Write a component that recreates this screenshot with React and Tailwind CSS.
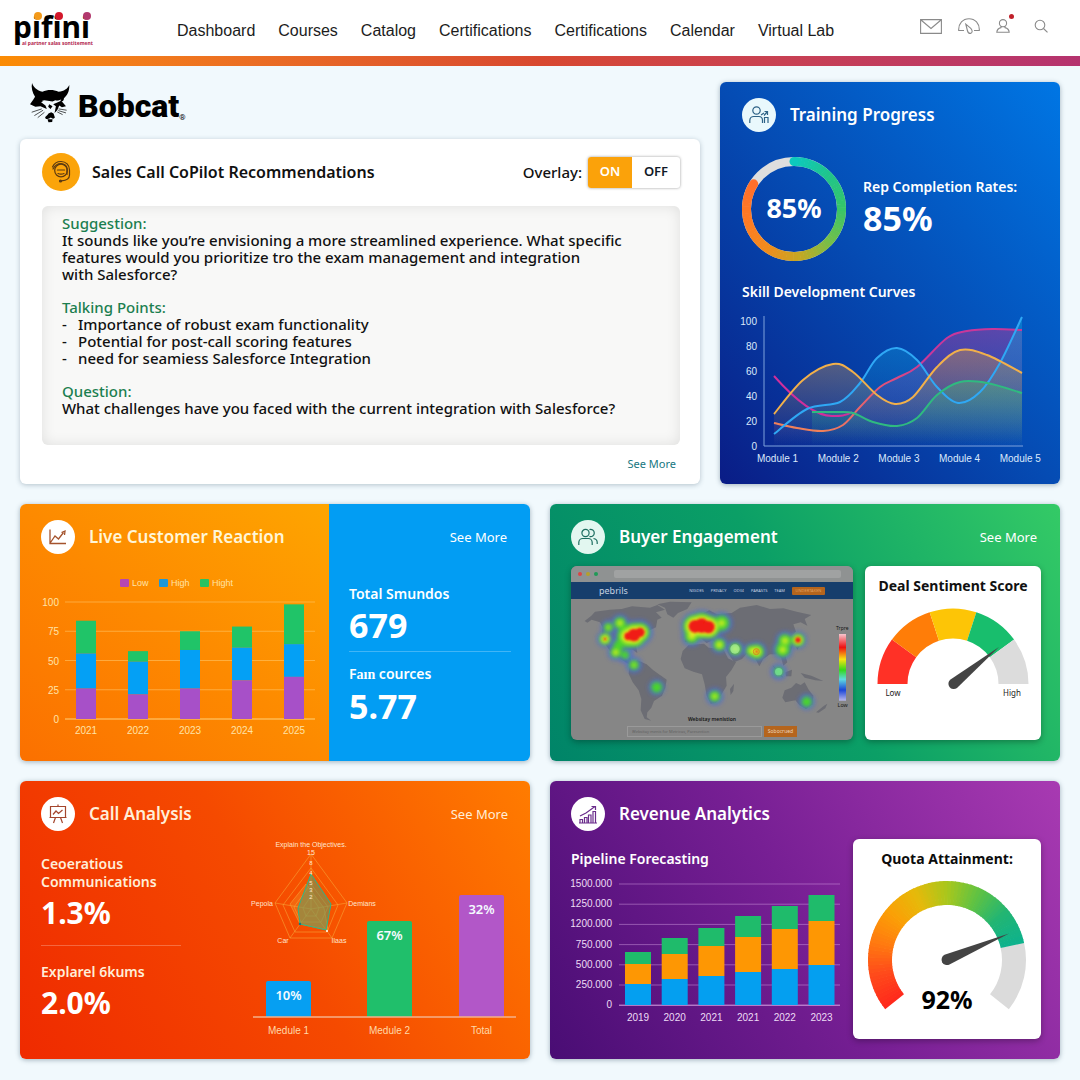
import { useState } from "react";
import clsx from "clsx";

const NAV_LINKS = ["Dashboard", "Courses", "Catalog", "Certifications", "Certifications", "Calendar", "Virtual Lab"];

const SKILL_LABELS = ["Module 1", "Module 2", "Module 3", "Module 4", "Module 5"];

const SKILL_SERIES = [
  { id: "pink", stroke: "url(#warm)", fill: "#b03a9a", points: [[34, 111], [57, 116], [83, 119], [103, 113], [120, 95], [140, 75], [157, 66], [177, 55], [207, 26], [227, 19], [253, 17], [282, 18]] },
  { id: "blue", stroke: "#2fa8f5", fill: "#0f9ad8", points: [[34, 122], [67, 97], [100, 90], [120, 71], [137, 46], [157, 36], [177, 48], [197, 75], [218, 91], [240, 80], [260, 51], [282, 5]] },
  { id: "green", stroke: "#2fba80", fill: "#1fb58a", points: [[72, 100], [97, 100], [113, 101], [133, 110], [157, 114], [177, 106], [197, 83], [220, 70], [247, 71], [282, 81]] },
  { id: "yellow", stroke: "#f2b04a", fill: "#b98a5a", points: [[34, 102], [63, 68], [93, 52], [113, 60], [137, 83], [155, 92], [173, 85], [197, 55], [220, 38], [247, 43], [282, 61]] },
];

const REACTIONS = [
  { year: 2021, low: 26, mid: 30, high: 28 },
  { year: 2022, low: 21, mid: 28, high: 9 },
  { year: 2023, low: 26, mid: 33, high: 16 },
  { year: 2024, low: 33, mid: 28, high: 18 },
  { year: 2025, low: 36, mid: 28, high: 34 },
];

const PIPELINE = [
  { year: 2019, parts: [21, 20, 12] },
  { year: 2020, parts: [26, 25, 16] },
  { year: 2021, parts: [29, 30, 18] },
  { year: 2021, parts: [33, 35, 21] },
  { year: 2022, parts: [36, 40, 23] },
  { year: 2023, parts: [40, 44, 26] },
];

const PIPELINE_TICKS = ["1500.000", "1250.000", "1200.000", "750.000", "500.000", "250.000", "0"];

// x, y, blue radius, green radius, yellow radius, red radius
const HEAT = [
  [175, 385, 22, 14, 5, 0], [165, 420, 24, 17, 11, 4], [210, 372, 26, 18, 8, 0], [205, 440, 26, 16, 0, 0],
  [235, 412, 42, 34, 22, 12], [252, 408, 44, 36, 27, 19], [270, 400, 38, 29, 20, 14], [197, 460, 24, 16, 8, 0],
  [225, 468, 24, 13, 0, 0], [252, 498, 24, 15, 5, 0], [320, 565, 24, 17, 0, 0],
  [435, 382, 42, 35, 27, 19], [455, 380, 46, 38, 30, 22], [475, 384, 42, 34, 27, 19], [425, 412, 30, 21, 10, 0],
  [515, 372, 32, 23, 9, 0], [508, 437, 26, 18, 9, 0], [556, 450, 26, 18, 9, 0], [605, 455, 24, 17, 9, 0],
  [620, 458, 30, 22, 13, 4], [705, 425, 28, 20, 9, 0], [698, 452, 30, 22, 9, 0], [744, 423, 26, 19, 13, 8],
  [686, 518, 24, 14, 0, 0], [494, 592, 26, 17, 7, 0], [770, 608, 24, 16, 0, 0],
];

const RING_COLORS = ["#0dc9bd", "#1fc48c", "#34c66b", "#6fc04c", "#c4a823", "#f28b1c", "#ff7a24", "#ff6f2b"];
const QUOTA_COLORS = ["#ff2a1c", "#ff4a1b", "#ff7a10", "#fb9f06", "#e6b90a", "#a9c71c", "#5fc243", "#22b573", "#0eb28c"];

const polar = (cx, cy, r, deg) => {
  const a = (deg * Math.PI) / 180;
  return [cx + r * Math.cos(a), cy - r * Math.sin(a)];
};

const mix = (colors, t) => {
  const pos = t * (colors.length - 1);
  const i = Math.min(Math.floor(pos), colors.length - 2);
  const rgb = (hex) => [1, 3, 5].map((k) => parseInt(hex.slice(k, k + 2), 16));
  const a = rgb(colors[i]);
  const b = rgb(colors[i + 1]);
  return `rgb(${a.map((v, k) => Math.round(v + (b[k] - v) * (pos - i))).join(",")})`;
};

// angles go clockwise from `from` down to `to`, 0 is three o'clock
const arc = (cx, cy, r, from, to) => {
  const [x1, y1] = polar(cx, cy, r, from);
  const [x2, y2] = polar(cx, cy, r, to);
  return `M${x1} ${y1}A${r} ${r} 0 ${from - to > 180 ? 1 : 0} 1 ${x2} ${y2}`;
};

const smooth = (pts) => {
  let d = `M${pts[0][0]} ${pts[0][1]}`;
  for (let i = 0; i < pts.length - 1; i++) {
    const p0 = pts[i - 1] || pts[i];
    const p1 = pts[i];
    const p2 = pts[i + 1];
    const p3 = pts[i + 2] || p2;
    d += `C${p1[0] + (p2[0] - p0[0]) / 6} ${p1[1] + (p2[1] - p0[1]) / 6} ${p2[0] - (p3[0] - p1[0]) / 6} ${p2[1] - (p3[1] - p1[1]) / 6} ${p2[0]} ${p2[1]}`;
  }
  return d;
};

function GradientArc({ cx, cy, r, width, from, to, colors }) {
  const steps = 72;
  const step = (from - to) / steps;
  return Array.from({ length: steps }, (_, i) => (
    <path
      key={i}
      d={arc(cx, cy, r, from - i * step, Math.max(to, from - (i + 1) * step - 0.6))}
      fill="none"
      stroke={mix(colors, i / (steps - 1))}
      strokeWidth={width}
    />
  ));
}

function IconCircle({ children, className }) {
  return (
    <span className={clsx("flex h-[34px] w-[34px] shrink-0 items-center justify-center rounded-full", className)}>
      {children}
    </span>
  );
}

function CardHeader({ icon, title, more, className }) {
  return (
    <div className="flex items-center gap-[14px]">
      {icon}
      <h2 className={clsx("text-[17px] font-semibold leading-6", className)}>{title}</h2>
      {more && <a href="#more" className="ml-auto text-[13px] leading-5 hover:underline">See More</a>}
    </div>
  );
}

function Stat({ label, value, valueClass = "text-[34px]" }) {
  return (
    <div>
      <p className="text-sm font-semibold leading-[18px]">{label}</p>
      <p className={clsx("mt-1 font-bold leading-9", valueClass)}>{value}</p>
    </div>
  );
}

function BobcatHead() {
  return (
    <svg viewBox="88 246 122 122" className="h-[41px] w-[41px]" aria-hidden="true">
      <path d="M97 249C101 262 112 271 128 275C142 269 160 268 176 275C192 274 203 266 208 255C208 275 202 286 192 294C192 300 188 304 184 304L166 300L158 304L134 300L124 306L137 316L141 326L122 318L107 320L91 312L101 298L106 290C98 278 94 262 97 249Z" />
      <path d="M128 300L148 306L146 311L132 308ZM184 298L166 304L167 310L180 305Z" fill="#f1f9fd" />
      <path d="M184 302L198 318L186 321L178 316L172 330L164 338L168 318L160 312ZM148 312L158 318L152 326L145 320Z" />
      <path d="M146 340L154 336L161 340L165 352C162 357 157 356 153 352C148 356 141 359 136 353C136 348 142 347 146 340ZM143 357L158 357L157 365L146 366Z" />
      <path d="M126 326L96 336M130 330L104 346M134 336L114 352M176 326L200 330M175 331L198 338M172 335L188 343" stroke="#000" strokeWidth="2" fill="none" />
    </svg>
  );
}

function Header() {
  const iconBtn = "flex h-6 w-[22px] items-center hover:opacity-70";
  return (
    <header>
      <div className="flex h-14 items-center bg-white pl-[14px] pr-6">
        <a href="#home" className="block w-[163px] shrink-0" aria-label="pifini">
          <svg viewBox="0 -4 86 50" className="h-[50px] w-[86px]" fontFamily="Noto Sans, sans-serif">
            <text x="-1" y="31" fontSize="30" fontWeight="700">pifini</text>
            <circle cx="24" cy="9" r="4" fill="#f39a1a" />
            <circle cx="45" cy="9" r="4" fill="#d3182b" />
            <circle cx="73" cy="9" r="4" fill="#b2396d" />
            <text x="8" y="38" fontSize="5" fontWeight="700" fill="#b3284f">ai partner salas sontitement</text>
          </svg>
        </a>
        <nav className="flex items-center gap-[23px] pt-[6px] font-['Liberation_Sans',Arial,sans-serif] text-base text-[#1c1c1c]">
          {NAV_LINKS.map((label, i) => (
            <a key={i} href="#nav" className="whitespace-nowrap hover:text-orange-600">{label}</a>
          ))}
        </nav>
        <div className="ml-auto flex items-center gap-4 pb-1 text-[#8a8a8a]">
          <button className={iconBtn} aria-label="Messages">
            <svg width="22" height="15" viewBox="0 0 22 15" fill="none" stroke="currentColor" strokeWidth="1.1">
              <path d="M.6.6h20.8v13.8H.6zM1 1l10 8.500L21 1" />
            </svg>
          </button>
          <button className={iconBtn} aria-label="Activity">
            <svg width="22" height="16" viewBox="0 0 22 16" fill="none" stroke="currentColor" strokeWidth="1.1">
              <path d="M6 12.500H.7C.3 5.500 5 .7 11 .7S21.700 5.500 21.300 12.500H16M7.800 6.200l5 4.200c2 2.200 1.600 4.600-.2 5-1.600.2-2.700-.8-3.200-2.900z" />
            </svg>
          </button>
          <button className={clsx(iconBtn, "relative")} aria-label="Account">
            <svg width="14" height="14" viewBox="0 0 14 14" fill="none" stroke="currentColor" strokeWidth="1.1">
              <circle cx="7" cy="4.200" r="3.600" />
              <path d="M5 7.400v1.200C2.500 9.200 1 10.600.8 13.300h12.400C13 10.600 11.500 9.200 9 8.600V7.400" />
            </svg>
            <span className="absolute right-1 top-0 h-[5px] w-[5px] rounded-full bg-[#c0202a]" />
          </button>
          <button className={iconBtn} aria-label="Search">
            <svg width="14" height="14" viewBox="0 0 14 14" fill="none" stroke="currentColor" strokeWidth="1.100">
              <circle cx="6" cy="6" r="4.800" />
              <path d="m9.500 9.500 4 3.800" />
            </svg>
          </button>
        </div>
      </div>
      <div className="h-[10px] bg-linear-to-r from-[#fb8c04] via-[#d8482f] to-[#b5336f]" />
    </header>
  );
}

function CoPilot() {
  const [on, setOn] = useState(true);
  const toggle = "h-[31px] text-[13px] font-semibold";
  return (
    <section className="flex flex-1 flex-col rounded-md bg-white pb-[11px] pl-[22px] pr-5 pt-[14px] shadow-[0_1px_5px_rgba(40,70,90,0.3)]">
      <div className="flex items-center gap-3">
        <span className="flex h-[38px] w-[38px] items-center justify-center rounded-full bg-[#fba40a]">
          <svg width="22" height="24" viewBox="0 0 22 24" fill="none" stroke="#5c3a12" strokeWidth="1.200" strokeLinecap="round">
            <circle cx="11" cy="10.500" r="6.300" />
            <path d="M2.500 7C4 3.500 7 1.500 11 1.500c5 0 8.500 3.500 8.500 8.500v5c0 3.500-3 5.500-8 5.800M3 9C5 5 8 3.500 11 3.500s6 2 6 5v6M7.500 10h7M8 13.500c2 .8 4 .8 6 0" />
            <circle cx="10.500" cy="21" r="1" fill="#5c3a12" />
          </svg>
        </span>
        <h2 className="text-base font-semibold">Sales Call CoPilot Recommendations</h2>
        <div className="ml-auto flex items-center gap-[6px]">
          <span className="text-[15px] font-medium">Overlay:</span>
          <div className="flex overflow-hidden rounded-[3px] bg-white shadow-[0_0_3px_rgba(0,0,0,0.4)]">
            <button className={clsx(toggle, "w-[44px]", on ? "bg-[#fba20a] text-white" : "text-gray-900")} onClick={() => setOn(true)} aria-pressed={on}>ON</button>
            <button className={clsx(toggle, "w-12", on ? "text-gray-900" : "bg-[#fba20a] text-white")} onClick={() => setOn(false)} aria-pressed={!on}>OFF</button>
          </div>
        </div>
      </div>
      <div className="mt-[15px] flex-1 rounded-md bg-[#f8f8f7] px-5 pt-[9px] text-[15px] font-medium leading-[17px] text-[#111] shadow-[inset_0_0_14px_rgba(0,0,0,0.1)]">
        <h3 className="text-[#1c7f50]">Suggestion:</h3>
        <p>
          It sounds like you’re envisioning a more streamlined experience. What specific<br />
          features would you prioritize tro the exam management and integration<br />
          with Salesforce?
        </p>
        <h3 className="mt-4 text-[#1c7f50]">Talking Points:</h3>
        <ul>
          {["Importance of robust exam functionality", "Potential for post-call scoring features", "need for seamiess Salesforce Integration"].map((t) => (
            <li key={t} className="flex"><span className="w-4">-</span>{t}</li>
          ))}
        </ul>
        <h3 className="mt-4 text-[#1c7f50]">Question:</h3>
        <p>What challenges have you faced with the current integration with Salesforce?</p>
      </div>
      <a href="#more" className="mr-1 mt-[10px] self-end text-[11px] leading-[18px] text-[#16777f] hover:underline">See More</a>
    </section>
  );
}

function SkillChart() {
  return (
    <svg viewBox="0 0 304 156" className="w-full" fontSize="10" fill="#dbe9fb" fontFamily="Liberation Sans, Arial, sans-serif">
      <defs>
        <linearGradient id="warm">
          <stop offset="0.2" stopColor="#f0805a" />
          <stop offset="0.45" stopColor="#e0507a" />
          <stop offset="0.62" stopColor="#c9379a" />
        </linearGradient>
        {SKILL_SERIES.map((s) => (
          <linearGradient key={s.id} id={`fill-${s.id}`} x1="0" y1="0" x2="0" y2="1">
            <stop offset="0" stopColor={s.fill} stopOpacity="0.5" />
            <stop offset="1" stopColor={s.fill} stopOpacity="0" />
          </linearGradient>
        ))}
      </defs>
      {[100, 80, 60, 40, 20, 0].map((v, i) => (
        <text key={v} x="17" y={13 + i * 25} textAnchor="end">{v}</text>
      ))}
      {SKILL_SERIES.map((s) => (
        <path key={s.id} d={`${smooth(s.points)}V134H${s.points[0][0]}Z`} fill={`url(#fill-${s.id})`} />
      ))}
      <path d="M24 4V134H283" fill="none" stroke="#7ea3dc" />
      <path d="M34 64C50 82 72 104 92 104C100 104 106 104 112 100" fill="none" stroke="#d02f9c" strokeWidth="2" />
      {SKILL_SERIES.map((s) => (
        <path key={s.id} d={smooth(s.points)} fill="none" stroke={s.stroke} strokeWidth="2" />
      ))}
      {SKILL_LABELS.map((l, i) => (
        <text key={l} x={37.500 + i * 60.700} y="150" textAnchor="middle">{l}</text>
      ))}
    </svg>
  );
}

function TrainingProgress() {
  return (
    <section className="rounded-md bg-linear-to-bl from-[#0076e4] via-[#054cb4] to-[#0a1c86] pb-4 pl-[22px] pr-4 pt-4 text-white shadow-[0_1px_5px_rgba(40,70,90,0.4)]">
      <CardHeader
        title="Training Progress"
        icon={
          <IconCircle className="bg-[#e9f8fc]">
            <svg width="20" height="18" viewBox="0 0 20 18" fill="none" stroke="#2d6286" strokeWidth="1.200">
              <circle cx="7.500" cy="4.500" r="3.700" />
              <path d="M.8 17v-2.500c0-2.500 2-4 4-4h5c2 0 3.700 1.500 3.700 4V17M12 9l3-2M15.500 17v-5.500h3.500V17M15 9.500l3-3.500M15.500 5.500h3V9" />
            </svg>
          </IconCircle>
        }
      />
      <div className="mt-[25px] flex items-center gap-[17px]">
        <svg viewBox="0 0 104 104" className="h-[104px] w-[104px] shrink-0">
          <circle cx="52" cy="52" r="47.500" fill="none" stroke="#dedede" strokeWidth="9" />
          <circle cx={polar(52, 52, 47.5, 148)[0]} cy={polar(52, 52, 47.5, 148)[1]} r="4.500" fill="#ff6f2b" />
          <GradientArc cx={52} cy={52} r={47.5} width={9} from={90} to={-212} colors={RING_COLORS} />
          <circle cx="52" cy="4.500" r="4.500" fill="#0dc9bd" />
          <text x="52" y="61" textAnchor="middle" fontSize="27" fontWeight="700" fill="#fff" fontFamily="Noto Sans, sans-serif">85%</text>
        </svg>
        <div className="pb-1">
          <Stat label="Rep Completion Rates:" value="85%" />
        </div>
      </div>
      <h3 className="mt-[22px] text-sm font-semibold leading-[18px]">Skill Development Curves</h3>
      <div className="mt-[11px] -ml-0.5">
        <SkillChart />
      </div>
    </section>
  );
}

function ReactionChart() {
  const unit = 1.17;
  return (
    <svg viewBox="0 0 276 168" className="w-full" fontSize="10" fill="#ffe3a8" fontFamily="Liberation Sans, Arial, sans-serif">
      {[["Low", "#b646b4", 79], ["High", "#1c97d8", 118], ["Hight", "#27c263", 159]].map(([name, color, x]) => (
        <g key={name} fontSize="9">
          <rect x={x} y="5" width="9" height="8" rx="1" fill={color} />
          <text x={x + 12} y="12">{name}</text>
        </g>
      ))}
      {[100, 75, 50, 25, 0].map((v, i) => (
        <g key={v}>
          <path d={`M24 ${28 + i * 29.250}H274`} stroke="#ffd27a" strokeOpacity={v ? 0.5 : 1} />
          <text x="18" y={32 + i * 29.250} textAnchor="end">{v}</text>
        </g>
      ))}
      {REACTIONS.map((r, i) => {
        const x = 35 + i * 52;
        return (
          <g key={r.year}>
            <rect x={x} y={145 - (r.low + r.mid + r.high) * unit} width="20" height={r.high * unit} fill="#20c468" />
            <rect x={x} y={145 - (r.low + r.mid) * unit} width="20" height={r.mid * unit} fill="#04a0f5" />
            <rect x={x} y={145 - r.low * unit} width="20" height={r.low * unit} fill="#a750c8" />
            <text x={x + 10} y="160" textAnchor="middle">{r.year}</text>
          </g>
        );
      })}
    </svg>
  );
}

function LiveReaction() {
  return (
    <section className="grid grid-cols-[minmax(0,309fr)_minmax(0,201fr)] overflow-hidden rounded-md text-white shadow-[0_1px_5px_rgba(40,70,90,0.4)]">
      <div className="bg-linear-to-tr from-[#fb7000] via-[#fd8a00] to-[#fea500] pb-[19px] pl-[21px] pr-3 pt-4">
        <CardHeader
          title="Live Customer Reaction"
          className="text-[#fff6d8]"
          icon={
            <IconCircle className="bg-white">
              <svg width="18" height="16" viewBox="0 0 18 16" fill="none" stroke="#a4532d" strokeWidth="1.300">
                <path d="M1 .5V14.500H17M1.500 13.500 6 7l3.500 3 5-6.500M12.500 3.500l3.500-1.500-.5 4" />
              </svg>
            </IconCircle>
          }
        />
        <div className="mt-5">
          <ReactionChart />
        </div>
      </div>
      <div className="bg-[#029df3] pl-5 pr-[19px] pt-[23px]">
        <a href="#more" className="mr-1 block text-right text-[13px] leading-5 hover:underline">See More</a>
        <div className="mt-[38px] border-b border-white/25 pb-2">
          <Stat label="Total Smundos" value="679" />
        </div>
        <div className="mt-[13px]">
          <Stat label={<>F<span className="font-['Liberation_Serif',serif] font-bold">aın</span> cources</>} value="5.77" />
        </div>
      </div>
    </section>
  );
}

function HeatMap() {
  const layer = (idx, color, blur) => (
    <g fill={color} filter={`url(#${blur})`}>
      {HEAT.filter((h) => h[idx] > 0).map((h) => (
        <circle key={`${h[0]}-${h[1]}`} cx={h[0]} cy={h[1]} r={h[idx]} />
      ))}
    </g>
  );
  return (
    <svg viewBox="63 300 846 375" className="block w-full">
      <defs>
        <filter id="soft"><feGaussianBlur stdDeviation="6" /></filter>
        <filter id="crisp"><feGaussianBlur stdDeviation="3" /></filter>
        <linearGradient id="scale" x1="0" y1="0" x2="0" y2="1">
          <stop offset="0" stopColor="#f7c6cf" />
          <stop offset="0.2" stopColor="#ee1111" />
          <stop offset="0.38" stopColor="#f7e411" />
          <stop offset="0.54" stopColor="#34d81b" />
          <stop offset="0.68" stopColor="#5fd9e0" />
          <stop offset="0.84" stopColor="#1b46d8" />
          <stop offset="1" stopColor="#b7b7ec" />
        </linearGradient>
      </defs>
      <g fill="#6c6d74">
        <path d="M104 366L124 350L135 338L180 332L215 330L246 322L300 326L322 318L345 332L318 340L335 356L322 362L318 385L290 398L276 425L258 440L262 462L248 452L226 452L218 470L232 482L240 474L246 492L264 492L244 500L215 482L196 470L180 455L165 435L155 410L158 385L150 370L125 362L112 371Z" />
        <path d="M322 316L360 308L425 310L412 330L384 342L370 356L352 346L345 326Z" />
        <path d="M238 500L262 484L290 496L310 514L350 542L346 566L336 590L312 606L304 626L292 640L290 655L304 665L284 660L272 634L274 600L266 574L248 550L236 524Z" />
        <path d="M404 428L410 404L424 396L420 376L440 366L448 348L478 334L500 346L545 342L570 326L620 318L660 330L700 328L740 338L784 348L764 360L772 380L752 370L730 376L738 398L720 414L730 436L720 462L706 470L712 490L700 500L694 478L682 466L660 466L640 480L628 502L614 476L590 464L576 480L552 490L534 462L526 440L500 436L488 424L470 432L450 416L428 432Z" />
        <path d="M392 480L398 456L416 438L462 434L476 446L520 450L534 478L558 490L544 514L528 534L530 560L512 590L498 612L482 614L470 590L464 556L456 526L430 518L404 508Z" />
        <path d="M540 570L552 554L550 576L542 588Z" />
        <path d="M697 596L704 574L724 566L738 552L752 558L764 550L776 572L790 590L788 616L768 630L748 618L736 604L706 610Z" />
        <path d="M798 640L822 620L832 614L826 628L806 641ZM668 498L690 522L700 536L684 528ZM706 520L726 512L724 532L708 532ZM752 522L784 530L820 546L796 544L764 536ZM750 440L742 452L738 444ZM434 372L426 382L422 370Z" />
      </g>
      <g opacity="0.75">{layer(2, "#4a62e8", "soft")}</g>
      {layer(3, "#49d62c", "soft")}
      {layer(4, "#e8ee22", "soft")}
      {layer(5, "#f01c12", "crisp")}
      <circle cx="555" cy="450" r="14" fill="#aaf0a4" opacity="0.7" />
      <circle cx="686" cy="518" r="11" fill="#7fe6a4" opacity="0.7" />
      <circle cx="619" cy="458" r="9" fill="none" stroke="#d18a22" strokeWidth="3" />
      <rect x="867" y="405" width="21" height="200" fill="url(#scale)" />
      <g fontFamily="Noto Sans, sans-serif" fill="#151515" textAnchor="middle">
        <text x="877" y="393" fontSize="15">Trpre</text>
        <text x="878" y="624" fontSize="16">Low</text>
        <text x="486" y="667" fontSize="15" fontWeight="600">Websitay menistion</text>
      </g>
    </svg>
  );
}

function SitePreview() {
  return (
    <div className="flex flex-col overflow-hidden rounded-md bg-[#868686] shadow-[0_2px_6px_rgba(0,0,0,0.3)]">
      <div className="flex h-4 items-center gap-1 bg-[#8f9292] pl-[7px] pr-3">
        <span className="h-1 w-1 rounded-full bg-[#dc4444]" />
        <span className="h-1 w-1 rounded-full bg-[#b5a02a]" />
        <span className="h-1 w-1 rounded-full bg-[#1f9a57]" />
        <span className="ml-3 h-2 flex-1 rounded-[2px] bg-[#a0a2a2]" />
      </div>
      <div className="flex h-[17px] items-center bg-[#163e6c] pl-7 pr-7 text-[#c5d1e0]">
        <span className="text-[9px] leading-4">pebrils</span>
        <div className="ml-auto flex items-center gap-[7px] text-[4px] leading-4">
          {["NIGDES", "PRIVACY", "ODGI", "PARASTS", "TEAM"].map((t) => (
            <a key={t} href="#site">{t}</a>
          ))}
          <button className="h-2 w-[33px] rounded-[1px] bg-[#b5651d] text-[4px] leading-[8px] text-[#e0a060]">UNDERTAKEN</button>
        </div>
      </div>
      <HeatMap />
      <div className="mx-auto mb-[3px] mt-[2px] flex h-[11px] w-[170px] gap-[2px]">
        <input
          type="text"
          aria-label="Website mention"
          placeholder="Websitay menis for Metricas, Paresection"
          className="h-[11px] min-w-0 flex-1 border border-[#9a9a9a] px-1 text-[4px] text-gray-800 placeholder-[#626262]"
        />
        <button className="h-[11px] w-[33px] bg-[#b5651d] text-[5px] leading-[11px] text-[#ecd6bc]">Sobocrued</button>
      </div>
    </div>
  );
}

function SentimentGauge() {
  const colors = ["#ff3126", "#ff7d08", "#fdc506", "#18be6d", "#dcdcdc"];
  return (
    <svg viewBox="0 0 156 96" className="w-full" fontSize="8" fill="#222" fontFamily="Noto Sans, sans-serif">
      {colors.map((c, i) => (
        <path key={c} d={arc(78, 78, 60.5, 180 - i * 36, 144 - i * 36)} fill="none" stroke={c} strokeWidth="30" />
      ))}
      <path d="M75.500 73.500L124 41L82 82A5.300 5.300 0 1 1 75.500 73.500Z" fill="#444" />
      <text x="18" y="90" textAnchor="middle">Low</text>
      <text x="137" y="90" textAnchor="middle">High</text>
    </svg>
  );
}

function BuyerEngagement() {
  return (
    <section className="rounded-md bg-linear-[60deg] from-[#008468] via-[#0b9f66] to-[#34ca66] pb-5 pl-[21px] pr-[19px] pt-4 text-white shadow-[0_1px_5px_rgba(40,70,90,0.4)]">
      <div className="pr-1">
        <CardHeader
          title="Buyer Engagement"
          more
          icon={
            <IconCircle className="bg-[#e2f7f0]">
              <svg width="20" height="18" viewBox="0 0 20 18" fill="none" stroke="#1c6e60" strokeWidth="1.200">
                <circle cx="7.500" cy="5" r="3.600" />
                <path d="M.8 17v-2.500c0-2.300 1.800-4 4-4h5.400c2.200 0 4 1.700 4 4V17M11.500 1.600a3.600 3.600 0 1 1 0 6.800M15.500 10.500c2.200.3 3.700 1.800 3.700 4V16" />
              </svg>
            </IconCircle>
          }
        />
      </div>
      <div className="mt-3 grid grid-cols-[minmax(0,282fr)_minmax(0,176fr)] gap-3">
        <SitePreview />
        <div className="rounded-md bg-white px-[10px] pb-3 pt-2 text-center shadow-[0_2px_6px_rgba(0,0,0,0.3)]">
          <h3 className="whitespace-nowrap text-sm font-bold leading-6 text-[#111]">Deal Sentiment Score</h3>
          <div className="mt-2">
            <SentimentGauge />
          </div>
        </div>
      </div>
    </section>
  );
}

function CallChart() {
  const bars = [
    ["10%", "Medule 1", 26, 147, "#069ff2"],
    ["67%", "Medule 2", 127, 87, "#20bf6b"],
    ["32%", "Total", 219, 61, "#b257c8"],
  ];
  return (
    <svg viewBox="0 0 280 207" className="w-full" fill="#ffd9a8" fontFamily="Liberation Sans, Arial, sans-serif" fontSize="7">
      <g fill="none" stroke="#f6a83a" strokeOpacity="0.8" strokeWidth="0.700">
        <path d="M71 20L107 69L92 104L50 104L35 69Z" />
        <path d="M71 34L98 71L87 98L55 98L43 71ZM71 50L88 73L81 88L61 88L54 73ZM71 62L79 74L76 82L66 82L63 74Z" />
        <path d="M71 75L71 20M71 75L107 69M71 75L92 104M71 75L50 104M71 75L35 69" />
        <path d="M66 50L50 70L60 90L88 96L84 74Z" fill="#f0a030" fillOpacity="0.3" />
      </g>
      <path d="M71 40L91 70L86 96L60 90L58 74Z" fill="#6f9a5a" fillOpacity="0.6" stroke="#2fb585" />
      <circle cx="60" cy="90" r="1.200" fill="#16777f" />
      <circle cx="87" cy="97" r="1" fill="#fff" />
      <g textAnchor="middle" fill="#ffe6cf">
        <text x="71" y="13">Explain the Objectives.</text>
        <text x="71" y="21">15</text>
        {[8, 4, 5, 3, 2].map((n, i) => (
          <text key={n} x="71" y={[31, 41, 51, 58, 65][i]} fontSize="6">{n}</text>
        ))}
        <text x="22" y="72">Pepola</text>
        <text x="122" y="72">Demians</text>
        <text x="43" y="109">Car</text>
        <text x="99" y="109">Ilaas</text>
      </g>
      {bars.map(([pct, label, x, y, color]) => (
        <g key={label} textAnchor="middle">
          <path d={`M${x} 183V${y + 2}q0-2 2-2H${x + 43}q2 0 2 2V183Z`} fill={color} />
          <text x={x + 22.500} y={y + 19} fontSize="13" fontWeight="600" fill="#f4fbff" fontFamily="Noto Sans, sans-serif">{pct}</text>
          <text x={x + 22.500} y="200" fontSize="10">{label}</text>
        </g>
      ))}
      <path d="M13 183H276" stroke="#f5b08a" strokeWidth="1.500" />
    </svg>
  );
}

function CallAnalysis() {
  return (
    <section className="rounded-md bg-linear-[60deg] from-[#ef2a00] via-[#f54a00] to-[#ff7c00] pb-4 pl-[21px] pr-[10px] pt-4 text-[#ffeed8] shadow-[0_1px_5px_rgba(40,70,90,0.4)]">
      <div className="pr-3">
        <CardHeader
          title="Call Analysis"
          more
          icon={
            <IconCircle className="bg-white">
              <svg width="18" height="20" viewBox="0 0 18 20" fill="none" stroke="#a4452d" strokeWidth="1.200">
                <path d="M1.500 2.500h15v11h-15zM9 .5v2M6.500 13.500l-2 5.500M11.500 13.500l2 5.500M4 10.500 7 7l2.500 2.500L13.500 6M.5 13.500h17" />
              </svg>
            </IconCircle>
          }
        />
      </div>
      <div className="flex justify-between">
        <div className="w-[140px] pt-6 [&_p:last-child]:text-white">
          <div className="border-b border-white/25 pb-[14px]">
            <Stat label={<>Ceoeratious<br />Communications</>} value="1.3%" valueClass="text-[30px]" />
          </div>
          <div className="mt-[17px]">
            <Stat label="Explarel 6kums" value="2.0%" valueClass="text-[30px]" />
          </div>
        </div>
        <div className="mt-[3px] w-[280px]">
          <CallChart />
        </div>
      </div>
    </section>
  );
}

function PipelineChart() {
  const colors = ["#049ff0", "#fe9703", "#1fbb6b"];
  return (
    <svg viewBox="0 0 270 150" className="w-full" fontSize="10" fill="#eddcf5" fontFamily="Liberation Sans, Arial, sans-serif">
      {PIPELINE_TICKS.map((t, i) => (
        <g key={t}>
          <path d={`M48 ${8 + i * 20.200}H269`} stroke="#d9a6e6" strokeOpacity={t === "0" ? 1 : 0.450} />
          <text x="41" y={11 + i * 20.200} textAnchor="end">{t}</text>
        </g>
      ))}
      {PIPELINE.map((p, i) => {
        const x = 54 + i * 36.700;
        let y = 129;
        return (
          <g key={i}>
            {p.parts.map((h, k) => {
              y -= h;
              return <rect key={k} x={x} y={y} width="26" height={h} fill={colors[k]} />;
            })}
            <text x={x + 13} y="145" textAnchor="middle">{p.year}</text>
          </g>
        );
      })}
    </svg>
  );
}

function QuotaGauge() {
  return (
    <svg viewBox="0 0 160 142" className="w-full" fontFamily="Noto Sans, sans-serif">
      <path d={arc(80, 81, 67, 13, -38.5)} fill="none" stroke="#dbdbdb" strokeWidth="24" />
      <GradientArc cx={80} cy={81} r={67} width={24} from={218.5} to={12.5} colors={QUOTA_COLORS} />
      <path d="M77.500 75.800L142 54.500L82.500 85.500A5.300 5.300 0 1 1 77.500 75.800Z" fill="#444" />
      <text x="80" y="130" textAnchor="middle" fontSize="25" fontWeight="700">92%</text>
    </svg>
  );
}

function RevenueAnalytics() {
  return (
    <section className="rounded-md bg-linear-[60deg] from-[#490d74] via-[#771f94] to-[#a83ab2] pb-5 pl-[21px] pr-[19px] pt-4 text-white shadow-[0_1px_5px_rgba(40,70,90,0.4)]">
      <CardHeader
        title="Revenue Analytics"
        icon={
          <IconCircle className="bg-white">
            <svg width="18" height="19" viewBox="0 0 18 19" fill="none" stroke="#6b2d8c" strokeWidth="1.200">
              <path d="M1 14.500h2.500V18H1zM5.500 12.500H8V18H5.500zM9.500 10H12v8H9.500zM14 6.500h2.500V18H14zM1 11l6-3 9-6.500M12.500 1.500h4V5M0 18h18" />
            </svg>
          </IconCircle>
        }
      />
      <div className="mt-2 grid grid-cols-[minmax(0,270fr)_minmax(0,188fr)] gap-3">
        <div className="pt-[11px]">
          <h3 className="text-sm font-semibold leading-[18px]">Pipeline Forecasting</h3>
          <div className="mt-2">
            <PipelineChart />
          </div>
        </div>
        <div className="rounded-md bg-white px-[14px] pb-[18px] pt-2 text-center text-[#0c0c0c] shadow-[0_2px_6px_rgba(0,0,0,0.3)]">
          <h3 className="whitespace-nowrap text-sm font-bold leading-6">Quota Attainment:</h3>
          <div className="mt-2">
            <QuotaGauge />
          </div>
        </div>
      </div>
    </section>
  );
}

export default function App() {
  return (
    <div className="min-h-screen bg-[#f1f9fd] font-['Noto_Sans',sans-serif] text-[#111]">
      <Header />
      <main className="space-y-5 px-5 pb-5 pt-4">
        <div className="grid grid-cols-[2fr_1fr] gap-5">
          <div className="flex min-w-0 flex-col">
            <div className="flex h-[57px] items-start gap-2 pl-[9px]">
              <BobcatHead />
              <p className="flex items-end whitespace-nowrap pt-1 font-[Roboto,sans-serif] text-[32px] font-black leading-10 text-black">
                Bobcat<span className="text-[8px] font-normal leading-4">®</span>
              </p>
            </div>
            <CoPilot />
          </div>
          <TrainingProgress />
        </div>
        <div className="grid grid-cols-2 gap-5">
          <LiveReaction />
          <BuyerEngagement />
          <CallAnalysis />
          <RevenueAnalytics />
        </div>
      </main>
    </div>
  );
}
